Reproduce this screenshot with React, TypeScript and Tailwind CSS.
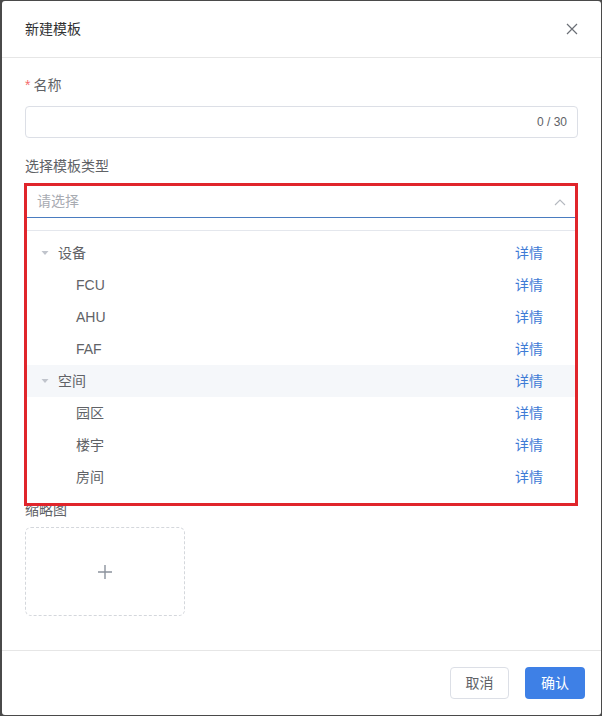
import React from 'react';

const rows = [
  { label: '设备', level: 0 },
  { label: 'FCU', level: 1 },
  { label: 'AHU', level: 1 },
  { label: 'FAF', level: 1 },
  { label: '空间', level: 0, active: true },
  { label: '园区', level: 1 },
  { label: '楼宇', level: 1 },
  { label: '房间', level: 1 },
];

const font = { fontFamily: '"Liberation Sans", "Noto Sans CJK SC", sans-serif' };

export default function App() {
  return (
    <div className="w-[602px] h-[716px] bg-[#4a4a4a] p-[1px] pl-[2px]" style={font}>
      <div className="h-full bg-white rounded-[3px] flex flex-col">
        {/* header */}
        <div className="h-[57px] flex items-center justify-between pl-[23px] pr-[23px] border-b border-[#e6e6e6] shrink-0">
          <span className="text-[14px] text-[#303133]">新建模板</span>
          <svg width="12" height="12" viewBox="0 0 12 12" className="text-[#6b6f76]">
            <path d="M1 1L11 11M11 1L1 11" stroke="currentColor" strokeWidth="1.2" />
          </svg>
        </div>

        {/* body */}
        <div className="flex-1 px-[23px] pt-[17px]">
          <div className="text-[14px] leading-[20px] text-[#606266]">
            <span className="text-[#f56c6c] mr-[3px]">*</span>名称
          </div>
          <div className="mt-[11px] h-[32px] border border-[#dcdfe6] rounded-[4px] flex items-center justify-end pr-[10px]">
            <span className="text-[12px] text-[#606266]">0 / 30</span>
          </div>

          <div className="mt-[18px] text-[14px] leading-[20px] text-[#606266]">选择模板类型</div>

          <div className="relative mt-[10px]">
            <div className="h-[32px] border-b border-[#4a7cc0] flex items-center justify-between pl-[12px] pr-[12px]">
              <span className="text-[14px] text-[#a8abb2]">请选择</span>
              <svg width="12" height="8" viewBox="0 0 12 8" className="text-[#b4b8bf]">
                <path d="M1 7L6 2L11 7" stroke="currentColor" strokeWidth="1.1" fill="none" />
              </svg>
            </div>

            {/* dropdown */}
            <div className="absolute left-[2px] right-[2px] top-[44px] h-[272px] bg-white border-t border-[#e4e7ed] overflow-hidden z-10">
              <div className="absolute -top-[6px] left-[268px] w-[10px] h-[10px] bg-white border-l border-t border-[#e4e7ed] rotate-45"></div>
              <div className="pt-[6px]">
                {rows.map((r, i) => (
                  <div
                    key={i}
                    className={`h-[32px] flex items-center justify-between pr-[33px] text-[14px] ${r.active ? 'bg-[#f5f7fa]' : ''}`}
                  >
                    <div className={`flex items-center ${r.level ? 'pl-[49px]' : 'pl-[14px]'}`}>
                      {r.level === 0 && (
                        <svg width="8" height="6" viewBox="0 0 8 6" className="mr-[9px] text-[#c0c4cc]">
                          <path d="M0.5 1H7.5L4 5Z" fill="currentColor" />
                        </svg>
                      )}
                      <span className="text-[#606266]">{r.label}</span>
                    </div>
                    <span className="text-[#3e7bd6]">详情</span>
                  </div>
                ))}
              </div>
            </div>

            {/* annotation frame */}
            <div className="absolute -left-[1px] right-0 -top-[3px] h-[323px] border-[3px] border-[#e0252b] z-20 pointer-events-none"></div>
          </div>

          <div className="mt-[282px] text-[14px] leading-[20px] text-[#606266]">缩略图</div>
          <div className="mt-[7px] w-[160px] h-[89px] border border-dashed border-[#d4d7dc] rounded-[6px] flex items-center justify-center">
            <svg width="14" height="14" viewBox="0 0 14 14" className="text-[#8c939d]">
              <path d="M7 0V14M0 7H14" stroke="currentColor" strokeWidth="1.4" />
            </svg>
          </div>
        </div>

        {/* footer */}
        <div className="h-[65px] border-t border-[#e6e6e6] flex items-start justify-end gap-[16px] pt-[16px] pr-[16px] shrink-0">
          <button className="w-[59px] h-[32px] border border-[#dcdfe6] rounded-[4px] text-[14px] text-[#606266] bg-white">取消</button>
          <button className="w-[60px] h-[32px] rounded-[4px] text-[14px] text-white bg-[#3e80e6]">确认</button>
        </div>
      </div>
    </div>
  );
}
